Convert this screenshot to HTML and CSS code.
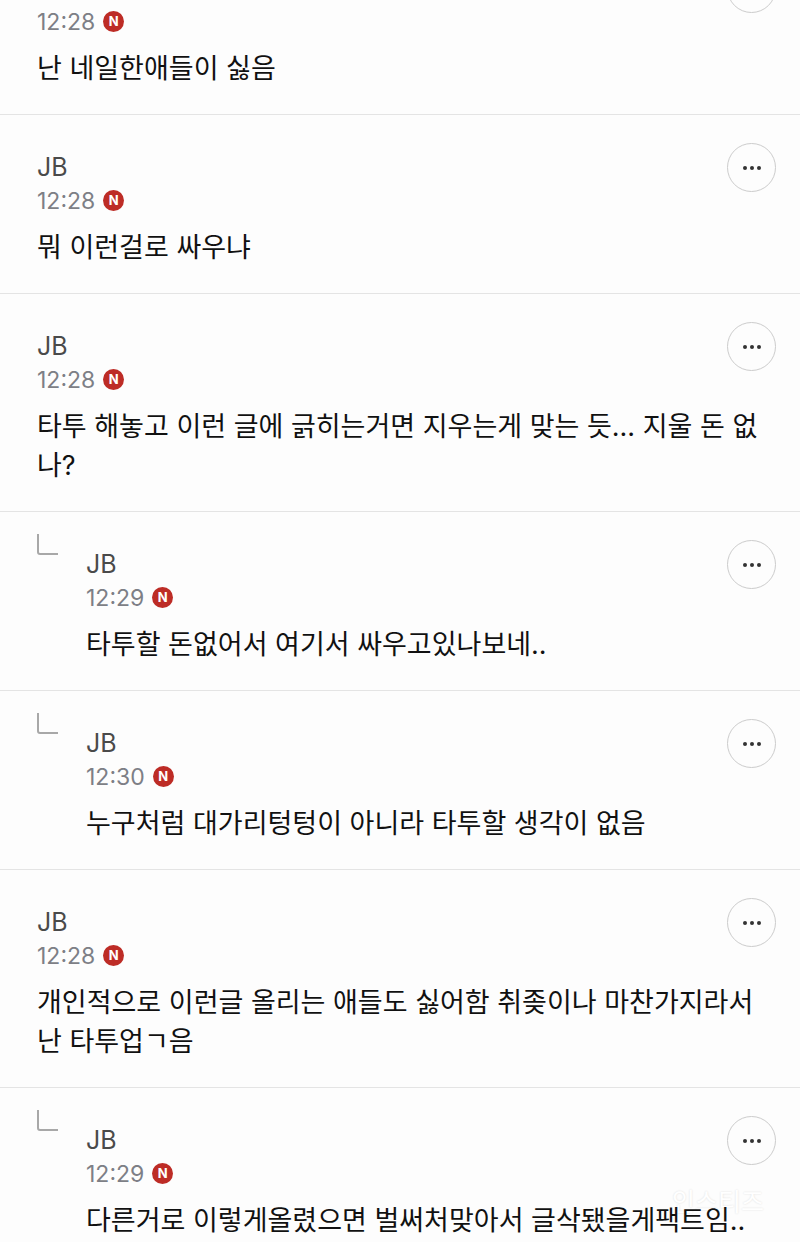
FILE: index.html
```html
<!DOCTYPE html>
<html lang="ko">
<head>
<meta charset="UTF-8">
<meta name="viewport" content="width=device-width, initial-scale=1.0">
<title>댓글</title>
<link rel="stylesheet" href="styles.css">
</head>
<body>
<div class="screen">
  <ul class="comments">
    <li class="comment">
      <div class="content">
        <div class="header">
          <div class="meta">
            <div class="name">JB</div>
            <div class="date"><time>12:28</time><span class="new">N</span></div>
          </div>
          <button class="more" aria-label="더보기"><i></i><i></i><i></i></button>
        </div>
        <p class="text">난 네일한애들이 싫음</p>
      </div>
    </li>
    <li class="comment">
      <div class="content">
        <div class="header">
          <div class="meta">
            <div class="name">JB</div>
            <div class="date"><time>12:28</time><span class="new">N</span></div>
          </div>
          <button class="more" aria-label="더보기"><i></i><i></i><i></i></button>
        </div>
        <p class="text">뭐 이런걸로 싸우냐</p>
      </div>
    </li>
    <li class="comment">
      <div class="content">
        <div class="header">
          <div class="meta">
            <div class="name">JB</div>
            <div class="date"><time>12:28</time><span class="new">N</span></div>
          </div>
          <button class="more" aria-label="더보기"><i></i><i></i><i></i></button>
        </div>
        <p class="text">타투 해놓고 이런 글에 긁히는거면 지우는게 맞는 듯... 지울 돈 없나?</p>
      </div>
    </li>
    <li class="comment reply">
      <svg class="corner" viewBox="0 0 22 22"><path d="M1 0V18Q1 20 3 20H21"/></svg>
      <div class="content">
        <div class="header">
          <div class="meta">
            <div class="name">JB</div>
            <div class="date"><time>12:29</time><span class="new">N</span></div>
          </div>
          <button class="more" aria-label="더보기"><i></i><i></i><i></i></button>
        </div>
        <p class="text">타투할 돈없어서 여기서 싸우고있나보네..</p>
      </div>
    </li>
    <li class="comment reply">
      <svg class="corner" viewBox="0 0 22 22"><path d="M1 0V18Q1 20 3 20H21"/></svg>
      <div class="content">
        <div class="header">
          <div class="meta">
            <div class="name">JB</div>
            <div class="date"><time>12:30</time><span class="new">N</span></div>
          </div>
          <button class="more" aria-label="더보기"><i></i><i></i><i></i></button>
        </div>
        <p class="text">누구처럼 대가리텅텅이 아니라 타투할 생각이 없음</p>
      </div>
    </li>
    <li class="comment">
      <div class="content">
        <div class="header">
          <div class="meta">
            <div class="name">JB</div>
            <div class="date"><time>12:28</time><span class="new">N</span></div>
          </div>
          <button class="more" aria-label="더보기"><i></i><i></i><i></i></button>
        </div>
        <p class="text">개인적으로 이런글 올리는 애들도 싫어함 취좆이나 마찬가지라서 난 타투업ㄱ음</p>
      </div>
    </li>
    <li class="comment reply">
      <svg class="corner" viewBox="0 0 22 22"><path d="M1 0V18Q1 20 3 20H21"/></svg>
      <div class="content">
        <div class="header">
          <div class="meta">
            <div class="name">JB</div>
            <div class="date"><time>12:29</time><span class="new">N</span></div>
          </div>
          <button class="more" aria-label="더보기"><i></i><i></i><i></i></button>
        </div>
        <p class="text">다른거로 이렇게올렸으면 벌써처맞아서 글삭됐을게팩트임..</p>
      </div>
    </li>
  </ul>
  <div class="watermark">인스티즈</div>
</div>
</body>
</html>
```
FILE: styles.css
```css
* { box-sizing: border-box; }
body { margin: 0; background: #fdfdfd; color: #111; font-family: Inter, "Noto Sans CJK KR", sans-serif; }
.screen { position: relative; height: 100vh; overflow: hidden; }

/* list is scrolled partway into the first comment */
.comments { list-style: none; margin: -64px 0 0; padding: 0; }
.comment { display: flex; padding: 28px 24px 26px 37px; border-bottom: 1px solid #e4e4e4; }
.content { flex: 1; min-width: 0; }
.corner { flex: none; width: 22px; height: 22px; margin: -6px 27px 0 0; fill: none; stroke: #a8a8a8; stroke-width: 2; }

.header { display: flex; justify-content: space-between; align-items: flex-start; }
.meta { padding-top: 8px; }
.name { font-size: 25px; line-height: 33px; color: #4a4a4a; }
.date { display: flex; align-items: center; gap: 8px; height: 33px; font-size: 23px; line-height: 26px; color: #7d7f86; }
.new { width: 21px; height: 21px; border-radius: 50%; background: #bd2c26; color: #fff; font-size: 13px; font-weight: 700; line-height: 21px; text-align: center; }
.more { display: flex; justify-content: center; align-items: center; gap: 3px; width: 49px; height: 49px; padding: 0; border: 1px solid #ccc; border-radius: 50%; background: none; }
.more i { width: 4px; height: 4px; border-radius: 50%; background: #333; }

.text { margin: 11px 0 0; font-size: 27px; line-height: 39px; word-break: break-all; }
.watermark { position: absolute; right: 36px; bottom: 24px; font-size: 25px; line-height: 32px; color: #fff; text-shadow: 0 0 2px #ddd; z-index: -1; }
```
